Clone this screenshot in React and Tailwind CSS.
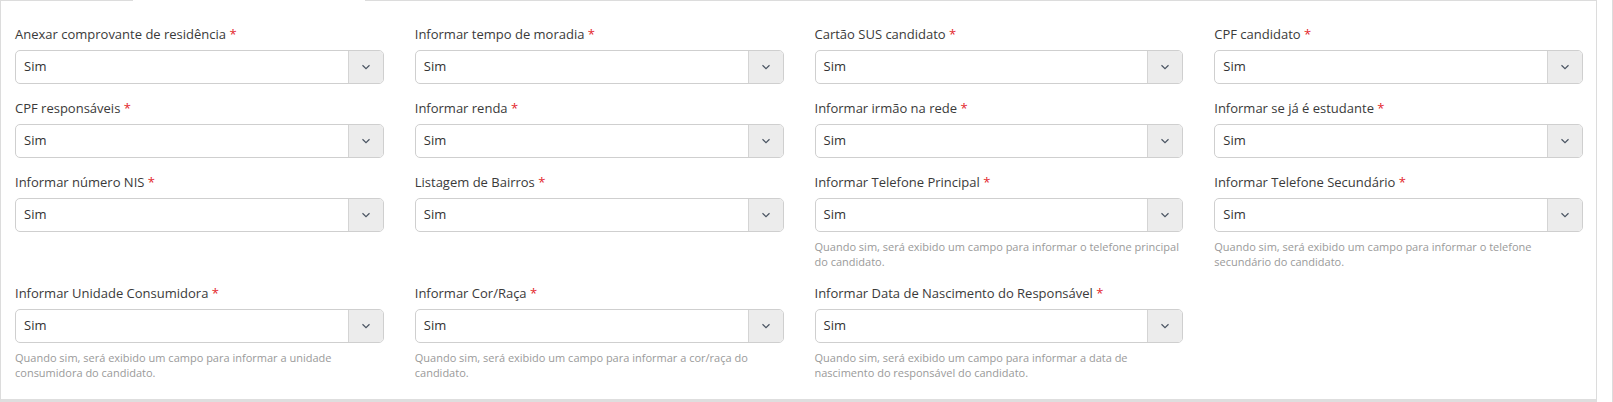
import React from "react";

const fields = [
	{ label: "Anexar comprovante de residência" },
	{ label: "Informar tempo de moradia" },
	{ label: "Cartão SUS candidato" },
	{ label: "CPF candidato" },
	{ label: "CPF responsáveis" },
	{ label: "Informar renda" },
	{ label: "Informar irmão na rede" },
	{ label: "Informar se já é estudante" },
	{ label: "Informar número NIS" },
	{ label: "Listagem de Bairros" },
	{
		label: "Informar Telefone Principal",
		help: "Quando sim, será exibido um campo para informar o telefone principal do candidato.",
	},
	{
		label: "Informar Telefone Secundário",
		help: "Quando sim, será exibido um campo para informar o telefone secundário do candidato.",
	},
	{
		label: "Informar Unidade Consumidora",
		help: "Quando sim, será exibido um campo para informar a unidade consumidora do candidato.",
	},
	{
		label: "Informar Cor/Raça",
		help: "Quando sim, será exibido um campo para informar a cor/raça do candidato.",
	},
	{
		label: "Informar Data de Nascimento do Responsável",
		help: "Quando sim, será exibido um campo para informar a data de nascimento do responsável do candidato.",
	},
];

function SelectField({ label, help }) {
	return (
		<div className="mb-[15px]">
			<label className="block text-[13px] leading-[18px] mb-[7px] text-[#3a3a3a]">
				{label} <span className="text-[#e3262b]">*</span>
			</label>
			<div className="flex h-[34px] border border-[#cfcfcf] rounded-[5px] bg-white overflow-hidden">
				<div className="flex-1 flex items-center pl-[8px] text-[13px] text-[#333]">Sim</div>
				<div className="w-[35px] flex items-center justify-center bg-[#ececec] border-l border-[#d4d4d4]">
					<svg width="10" height="6" viewBox="0 0 10 6" fill="none">
						<path d="M1.5 1.2l3.5 3.4 3.5-3.4" stroke="#4b5563" strokeWidth="1.2" />
					</svg>
				</div>
			</div>
			{help && (
				<p className="mt-[7px] text-[11px] leading-[15px] text-[#9a9a9a]">{help}</p>
			)}
		</div>
	);
}

export default function App() {
	return (
		<div
			className="flex w-[1613px] h-[402px] bg-white"
			style={{ fontFamily: '"Open Sans", "Liberation Sans", sans-serif' }}>
			{/* painel do formulário */}
			<div className="flex-1 flex flex-col border-l border-r border-[#dcdcdc] border-b-[3px] border-b-[#dedede]">
				{/* borda superior com recorte da aba ativa */}
				<div className="flex h-px">
					<div className="w-[132px] bg-[#dcdcdc]" />
					<div className="w-[232px] bg-white" />
					<div className="flex-1 bg-[#dcdcdc]" />
				</div>
				<div className="flex-1 pt-[24px] pl-[14px] pr-[13px] grid grid-cols-4 gap-x-[31px] content-start">
					{fields.map((f) => (
						<SelectField key={f.label} label={f.label} help={f.help} />
					))}
				</div>
			</div>
			{/* coluna lateral */}
			<div className="w-[16px] border-r border-[#dcdcdc]" />
		</div>
	);
}
